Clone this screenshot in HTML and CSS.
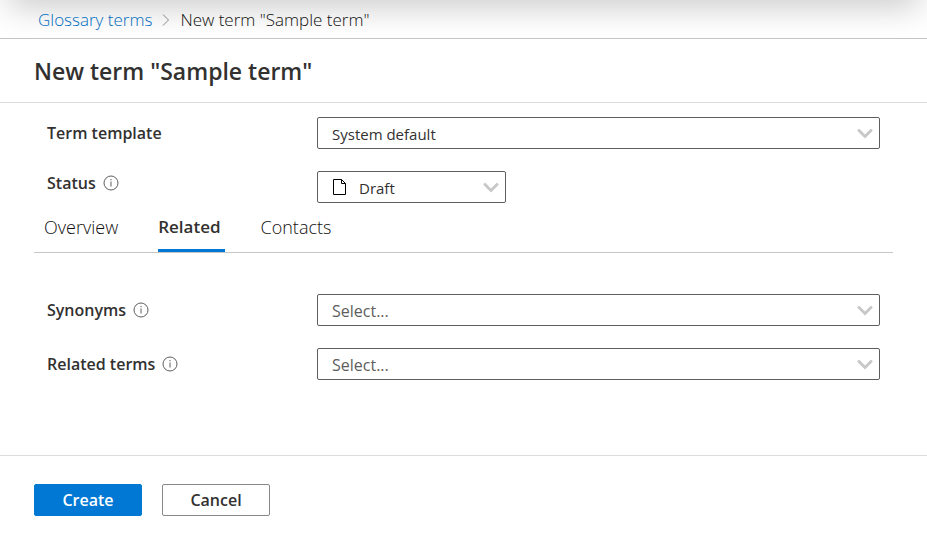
FILE: index.html
```html
<!DOCTYPE html>
<html lang="en">
<head>
<meta charset="utf-8">
<meta name="viewport" content="width=device-width, initial-scale=1">
<title>New term "Sample term"</title>
<link rel="stylesheet" href="styles.css">
</head>
<body>
<svg class="symbols" aria-hidden="true">
  <symbol id="info" viewBox="0 0 16 16">
    <circle cx="8" cy="8" r="7" fill="none" stroke="currentColor"/>
    <path d="M8 6.500v5M8 4v1.300" fill="none" stroke="currentColor"/>
  </symbol>
  <symbol id="chevron" viewBox="0 0 16 10">
    <path d="M2 1.500l6 6 6-6" fill="none" stroke="currentColor" stroke-width="3" stroke-linecap="round"/>
  </symbol>
</svg>
<nav class="breadcrumb" aria-label="Breadcrumb">
  <a href="#">Glossary terms</a>
  <svg class="separator" viewBox="0 0 8 12" aria-hidden="true"><path d="M1 .5L6.500 6 1 11.500" fill="none" stroke="currentColor"/></svg>
  <span>New term "Sample term"</span>
</nav>
<header class="title-bar"><h1>New term "Sample term"</h1></header>
<form class="form">
  <main>
    <div class="fields">
      <div class="field">
        <div class="caption"><label for="template">Term template</label></div>
        <div class="control">
          <select id="template"><option>System default</option></select>
          <svg class="chevron" aria-hidden="true"><use href="#chevron"/></svg>
        </div>
      </div>
      <div class="field">
        <div class="caption caption-raised"><label for="status">Status</label><svg class="info" aria-hidden="true"><use href="#info"/></svg></div>
        <div class="control control-short">
          <svg class="document" viewBox="0 0 14 16" aria-hidden="true"><path d="M.5.5h8l4 4v11H.5zM8.500.5v4h4" fill="none" stroke="currentColor"/></svg>
          <select id="status" class="with-icon"><option>Draft</option></select>
          <svg class="chevron" aria-hidden="true"><use href="#chevron"/></svg>
        </div>
      </div>
    </div>
    <div class="tabs" role="tablist">
      <button type="button" role="tab" aria-selected="false">Overview</button>
      <button type="button" role="tab" aria-selected="true">Related</button>
      <button type="button" role="tab" aria-selected="false">Contacts</button>
    </div>
    <div class="fields fields-related">
      <div class="field">
        <div class="caption"><label for="synonyms">Synonyms</label><svg class="info" aria-hidden="true"><use href="#info"/></svg></div>
        <div class="control">
          <select id="synonyms" class="empty"><option>Select...</option></select>
          <svg class="chevron" aria-hidden="true"><use href="#chevron"/></svg>
        </div>
      </div>
      <div class="field">
        <div class="caption"><label for="related">Related terms</label><svg class="info" aria-hidden="true"><use href="#info"/></svg></div>
        <div class="control">
          <select id="related" class="empty"><option>Select...</option></select>
          <svg class="chevron" aria-hidden="true"><use href="#chevron"/></svg>
        </div>
      </div>
    </div>
  </main>
  <footer class="actions">
    <button type="submit" class="button primary">Create</button>
    <button type="button" class="button">Cancel</button>
  </footer>
</form>
</body>
</html>
```
FILE: styles.css
```css
* { box-sizing: border-box; }

body {
  margin: 0;
  background: #fff;
  color: #323130;
  font: 16px/24px "Open Sans", "Segoe UI", sans-serif;
}

button, select { font: inherit; color: inherit; }

.symbols { position: absolute; width: 0; height: 0; }

.breadcrumb {
  position: relative;
  overflow: hidden;
  display: flex;
  align-items: center;
  gap: 10px;
  padding: 8px 38px 6px;
  border-bottom: 1px solid #c4c4c4;
  color: #11100f;
  font-size: 17px;
  font-weight: 300;
}

/* Shadow cast by the panel above the page */
.breadcrumb::before {
  content: "";
  position: absolute;
  inset: -40px 8px auto;
  height: 40px;
  box-shadow: 0 8px 32px rgba(0, 0, 0, .2);
}

.breadcrumb > * { position: relative; }
.breadcrumb a { color: #006cbe; text-decoration: none; }
.separator { width: 8px; height: 12px; color: #8a8886; }

.title-bar {
  padding: 16px 34px 15px;
  border-bottom: 1px solid #dcdcdc;
}

h1 {
  margin: 0;
  font-size: 23px;
  line-height: 32px;
  font-weight: 600;
}

main { padding: 14px 34px 75px; }

.fields { display: grid; gap: 22px; padding: 0 13px; }
.fields-related { padding-top: 41px; }

.field {
  display: grid;
  grid-template-columns: 270px minmax(0, 1fr);
}

.caption { display: flex; align-items: center; gap: 7px; font-weight: 600; }
.caption-raised { padding-bottom: 8px; }
.info { width: 16px; height: 16px; color: #605e5c; }

.control { position: relative; }
.control-short { width: 189px; }

select {
  appearance: none;
  display: block;
  width: 100%;
  height: 32px;
  padding: 2px 36px 0 14px;
  border: 1px solid #605e5c;
  border-radius: 2px;
  background: #fff;
  font-size: 15px;
}

.with-icon { padding-left: 41px; }
.empty { color: #605e5c; font-size: 16px; }

.chevron {
  position: absolute;
  top: 12px;
  right: 7px;
  width: 16px;
  height: 10px;
  color: #c8c8c8;
  pointer-events: none;
}

.document {
  position: absolute;
  top: 8px;
  left: 16px;
  width: 14px;
  height: 16px;
  color: #000;
}

.tabs {
  display: flex;
  gap: 36px;
  padding: 0 10px;
  border-bottom: 1px solid #c8c6c4;
}

.tabs button {
  padding: 12px 4px 10px 0;
  border: 0;
  border-bottom: 3px solid transparent;
  background: none;
  color: #11100f;
  font-size: 18px;
  font-weight: 300;
}

.tabs [aria-selected="true"] {
  border-color: #0078d4;
  color: #323130;
  font-size: 17px;
  font-weight: 600;
}

.actions {
  display: flex;
  gap: 20px;
  padding: 28px 34px;
  border-top: 1px solid #dcdcdc;
}

.button {
  min-width: 108px;
  height: 32px;
  padding: 0 20px;
  border: 1px solid #8a8886;
  border-radius: 2px;
  background: #fff;
  font-weight: 600;
}

.primary { border-color: #0078d4; background: #0078d4; color: #fff; }
```
